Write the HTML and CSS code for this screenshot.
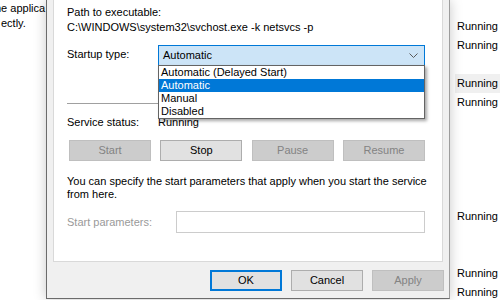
FILE: index.html
```html
<!DOCTYPE html>
<html>
<head>
<meta charset="utf-8">
<link rel="stylesheet" href="styles.css">
</head>
<body>
<div class="desktop">
  <div class="desc">
    <p class="desc-line first">he applica</p>
    <p class="desc-line">ectly.</p>
  </div>
  <div class="services">
    <div class="svc-row">Running</div>
    <div class="svc-row">Running</div>
    <div class="svc-row"></div>
    <div class="svc-row sel">Running</div>
    <div class="svc-row">Running</div>
    <div class="svc-row"></div>
    <div class="svc-row"></div>
    <div class="svc-row"></div>
    <div class="svc-row"></div>
    <div class="svc-row"></div>
    <div class="svc-row">Running</div>
    <div class="svc-row"></div>
    <div class="svc-row"></div>
    <div class="svc-row">Running</div>
    <div class="svc-row">Running</div>
  </div>
</div>

<div class="dialog">
  <div class="panel">
    <div class="text-line">Path to executable:</div>
    <div class="text-line">C:\WINDOWS\system32\svchost.exe -k netsvcs -p</div>

    <div class="startup-row">
      <div class="label startup-label">Startup type:</div>
      <div class="combo-wrap">
        <div class="combo">
          <span>Automatic</span>
          <svg class="chevron" width="9" height="6" viewBox="0 0 9 6"><path d="M0.5 0.5 L4.5 4.5 L8.5 0.5" fill="none" stroke="#5a5a5a" stroke-width="1"/></svg>
        </div>
        <div class="dropdown">
          <div class="opt">Automatic (Delayed Start)</div>
          <div class="opt active">Automatic</div>
          <div class="opt">Manual</div>
          <div class="opt">Disabled</div>
        </div>
      </div>
    </div>

    <div class="separator"></div>

    <div class="status-row">
      <div class="label">Service status:</div>
      <div class="status-value">Running</div>
    </div>

    <div class="svc-buttons">
      <div class="btn disabled">Start</div>
      <div class="btn">Stop</div>
      <div class="btn disabled">Pause</div>
      <div class="btn disabled">Resume</div>
    </div>

    <p class="para">You can specify the start parameters that apply when you start the service<br>from here.</p>

    <div class="params-row">
      <div class="label params-label">Start parameters:</div>
      <div class="input"></div>
    </div>
  </div>

  <div class="dlg-buttons">
    <div class="btn dlg default">OK</div>
    <div class="btn dlg">Cancel</div>
    <div class="btn dlg disabled">Apply</div>
  </div>
</div>
</body>
</html>
```

FILE: styles.css
```css
* { box-sizing: border-box; }

html, body {
  margin: 0;
  padding: 0;
  width: 500px;
  height: 300px;
  overflow: hidden;
  background: #ffffff;
  font-family: "Liberation Sans", Arial, sans-serif;
  font-size: 11px;
  color: #000;
}

.desktop {
  display: flex;
  justify-content: space-between;
  height: 300px;
}

.desc {
  width: 46px;
  overflow: hidden;
  padding-top: 1px;
}

.desc-line {
  margin: 0;
  line-height: 15px;
  white-space: nowrap;
  padding-left: 1px;
}

.desc-line.first {
  margin-left: -6px;
}

.services {
  width: 45px;
  padding-top: 17px;
}

.svc-row {
  height: 19px;
  line-height: 19px;
  padding-left: 2px;
  white-space: nowrap;
  overflow: hidden;
}

.svc-row.sel {
  background: #f0f0f0;
}

.dialog {
  position: absolute;
  left: 46px;
  top: 0;
  width: 404px;
  height: 299px;
  background: #f0f0f0;
  border-left: 1px solid #6b6b6b;
  border-right: 1px solid #9c9c9c;
  border-bottom: 1px solid #6b6b6b;
  box-shadow: 0 0 12px rgba(0, 0, 0, 0.22);
  display: flex;
  flex-direction: column;
}

.panel {
  margin: 0 6px;
  height: 262px;
  background: #fff;
  border: 1px solid #d9d9d9;
  border-top: none;
  padding: 5px 17px 0 13px;
}

.text-line {
  line-height: 15px;
  white-space: nowrap;
}

.label {
  line-height: 15px;
  white-space: nowrap;
}

.startup-row {
  display: flex;
  margin-top: 10px;
}

.startup-label {
  width: 91px;
  padding-top: 2px;
}

.combo-wrap {
  position: relative;
  flex: 1;
}

.combo {
  height: 21px;
  border: 1px solid #0078d7;
  background: #cce4f7;
  display: flex;
  align-items: center;
  justify-content: space-between;
  padding: 0 6px 0 4px;
  line-height: 19px;
}

.chevron {
  display: block;
  margin-top: 1px;
}

.dropdown {
  position: absolute;
  left: 0;
  right: 0;
  top: calc(100% - 1px);
  background: #fff;
  border: 1px solid #646464;
  box-shadow: 2px 2px 3px rgba(0, 0, 0, 0.35);
  z-index: 5;
}

.opt {
  height: 13px;
  line-height: 13px;
  padding-left: 2px;
  white-space: nowrap;
}

.opt.active {
  background: #0078d7;
  color: #fff;
}

.separator {
  height: 1px;
  background: #a0a0a0;
  margin-top: 37px;
}

.status-row {
  display: flex;
  margin-top: 11px;
}

.status-row .label {
  width: 91px;
}

.status-value {
  line-height: 15px;
}

.svc-buttons {
  display: flex;
  justify-content: space-between;
  margin: 10px 0 0 2px;
}

.btn {
  width: 82px;
  height: 21px;
  line-height: 19px;
  text-align: center;
  background: #e1e1e1;
  border: 1px solid #adadad;
  color: #000;
}

.btn.disabled {
  background: #cccccc;
  border-color: #bfbfbf;
  color: #838383;
}

.para {
  margin: 14px 0 0;
  line-height: 13px;
  white-space: nowrap;
}

.params-row {
  display: flex;
  align-items: center;
  margin-top: 10px;
}

.params-label {
  width: 109px;
  color: #9a9a9a;
}

.input {
  flex: 1;
  height: 22px;
  border: 1px solid #cccccc;
  background: #fff;
}

.dlg-buttons {
  display: flex;
  justify-content: flex-end;
  gap: 9px;
  padding: 8px 5px 0 0;
}

.btn.dlg {
  width: 72px;
}

.btn.default {
  border: 2px solid #0078d7;
  line-height: 17px;
}
```
